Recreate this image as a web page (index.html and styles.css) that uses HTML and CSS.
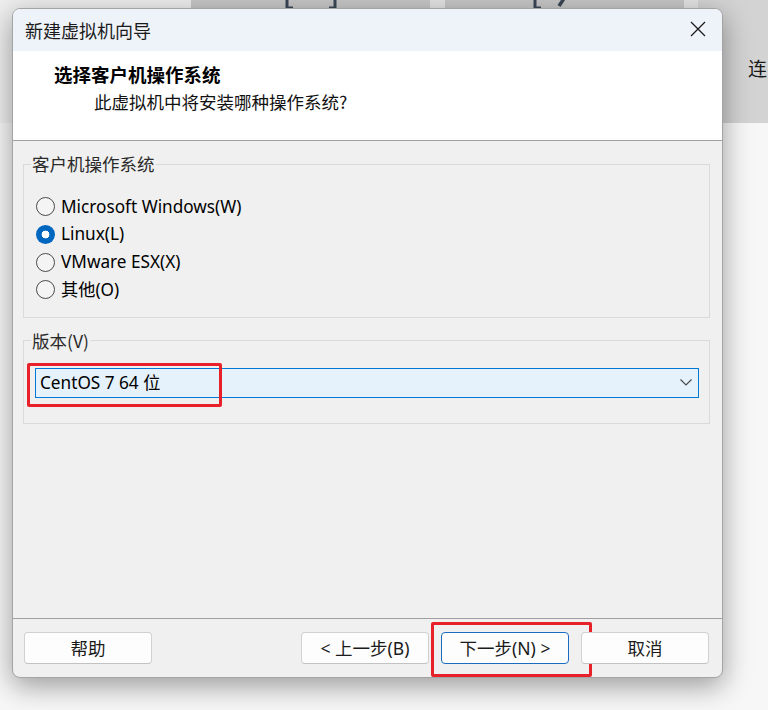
FILE: index.html
```html
<!DOCTYPE html>
<html lang="zh-CN">
<head>
<meta charset="utf-8">
<title>新建虚拟机向导</title>
<link rel="stylesheet" href="styles.css">
</head>
<body>
<div class="desktop">
  <div class="toolbar">
    <div class="strip strip-left"></div>
    <div class="tile">
      <svg class="tile-icon" width="64" height="30" viewBox="0 0 64 30">
        <path d="M8 0 V26 H14 M56 0 V26 H50" fill="none" stroke="#3b4756" stroke-width="3"/>
        <path d="M20 8 H44 M32 0 V16" fill="none" stroke="#3b4756" stroke-width="3.5"/>
      </svg>
    </div>
    <div class="strip"></div>
    <div class="tile">
      <svg class="tile-icon" width="72" height="30" viewBox="0 0 72 30">
        <path d="M6 0 V26 H12" fill="none" stroke="#3b4756" stroke-width="3"/>
        <path d="M30 24 L46 0" fill="none" stroke="#3b4756" stroke-width="3.5"/>
        <path d="M66 0 V18" fill="none" stroke="#3b4756" stroke-width="3"/>
      </svg>
    </div>
    <div class="strip strip-narrow"></div>
    <div class="tile tile-right"><span class="bg-text">连</span></div>
  </div>
  <div class="desk-lower"></div>
</div>

<div class="dialog">
  <div class="titlebar">
    <span class="title">新建虚拟机向导</span>
    <svg class="close" width="16" height="16" viewBox="0 0 16 16">
      <path d="M1 1 L15 15 M15 1 L1 15" stroke="#1b1b1b" stroke-width="1.3" fill="none"/>
    </svg>
  </div>
  <div class="header">
    <div class="header-title">选择客户机操作系统</div>
    <div class="header-sub">此虚拟机中将安装哪种操作系统?</div>
  </div>
  <div class="body">
    <fieldset class="group group-os">
      <legend>客户机操作系统</legend>
      <div class="radios">
        <div class="radio-row"><span class="radio"></span><span class="radio-label">Microsoft Windows(W)</span></div>
        <div class="radio-row"><span class="radio checked"></span><span class="radio-label">Linux(L)</span></div>
        <div class="radio-row"><span class="radio"></span><span class="radio-label">VMware ESX(X)</span></div>
        <div class="radio-row"><span class="radio"></span><span class="radio-label">其他(O)</span></div>
      </div>
    </fieldset>
    <fieldset class="group group-ver">
      <legend>版本(V)</legend>
      <div class="combo">
        <span class="combo-text">CentOS 7 64 位</span>
        <svg class="chevron" width="12" height="7" viewBox="0 0 12 7">
          <path d="M0.5 0.5 L6 6 L11.5 0.5" stroke="#4a4a4a" stroke-width="1.2" fill="none"/>
        </svg>
        <span class="highlight highlight-combo"></span>
      </div>
    </fieldset>
  </div>
  <div class="footer">
    <button class="btn">帮助</button>
    <div class="btn-group">
      <button class="btn">&lt; 上一步(B)</button>
      <button class="btn btn-primary">下一步(N) &gt;<span class="highlight highlight-next"></span></button>
      <button class="btn">取消</button>
    </div>
  </div>
</div>
</body>
</html>
```

FILE: styles.css
```css
* { box-sizing: border-box; }

html, body {
  margin: 0;
  padding: 0;
}

body {
  width: 768px;
  height: 710px;
  overflow: hidden;
  position: relative;
  background: #f6f6f6;
  font-family: "Noto Sans", "Noto Sans CJK SC", sans-serif;
  color: #111;
}

.desktop {
  position: absolute;
  inset: 0;
  display: flex;
  flex-direction: column;
}

.toolbar {
  display: flex;
  height: 123px;
}

.strip {
  width: 15px;
  background: #e3e3e3;
}

.strip-left {
  width: 191px;
  background: #eeeeee;
}

.strip-narrow { width: 14px; }

.tile {
  width: 239px;
  background: #c6c6c6;
  display: flex;
  justify-content: center;
  align-items: flex-start;
  overflow: hidden;
}

.tile-icon {
  margin-top: -18px;
}

.tile-right {
  flex: 1;
  width: auto;
  background: #d3d3d3;
  justify-content: flex-start;
  padding: 56px 0 0 50px;
}

.bg-text {
  font-family: "Noto Sans CJK SC", sans-serif;
  font-size: 19px;
  line-height: 24px;
  color: #1a1a1a;
  white-space: nowrap;
}

.desk-lower {
  flex: 1;
  background: #f7f7f7;
}

/* dialog window */
.dialog {
  position: absolute;
  left: 12px;
  top: 8px;
  width: 711px;
  height: 670px;
  border: 1px solid #a4a4a4;
  border-radius: 8px;
  overflow: hidden;
  display: flex;
  flex-direction: column;
  background: #f0f0f0;
  box-shadow: 0 8px 28px rgba(0, 0, 0, 0.38);
}

.titlebar {
  height: 42px;
  flex: none;
  background: #eef2f9;
  display: flex;
  align-items: center;
  justify-content: space-between;
  padding: 0 16px 0 12px;
}

.title {
  font-family: "Noto Sans CJK SC", sans-serif;
  font-size: 18px;
  line-height: 22px;
  color: #1a1a1a;
  margin-top: -1px;
}

.close { margin-top: -2px; }

.header {
  height: 90px;
  flex: none;
  background: #ffffff;
  border-bottom: 1px solid #a0a0a0;
  padding: 12px 0 0 41px;
  font-family: "Noto Sans CJK SC", sans-serif;
}

.header-title {
  font-size: 18.5px;
  line-height: 22px;
  font-weight: 700;
  color: #000;
}

.header-sub {
  margin-top: 6px;
  padding-left: 40px;
  font-size: 17.5px;
  line-height: 22px;
  color: #111;
}

.body {
  flex: 1;
  padding: 12px 12px 0 10px;
  display: flex;
  flex-direction: column;
}

.group {
  margin: 0;
  border: 1px solid #dadada;
  min-width: 0;
}

.group legend {
  padding: 0 1px;
  font-family: "Noto Sans CJK SC", sans-serif;
  font-size: 17.5px;
  line-height: 22px;
  color: #2a2a2a;
}

.group-os {
  padding: 18px 12px 13px 12px;
}

.group-os legend { margin-left: -5px; }

.radios {
  display: flex;
  flex-direction: column;
}

.radio-row {
  height: 27.67px;
  display: flex;
  align-items: center;
  gap: 6px;
}

.radio {
  width: 19px;
  height: 19px;
  border-radius: 50%;
  border: 1px solid #4a4a4a;
  background: #f4f4f4;
  flex: none;
}

.radio.checked {
  border: none;
  background: radial-gradient(circle, #ffffff 0 3.6px, #0067c0 4.2px);
}

.radio-label {
  font-size: 17.2px;
  line-height: 22px;
  color: #000;
}

.group-ver {
  margin-top: 12px;
  padding: 16px 10px 25px 11px;
}

.group-ver legend { margin-left: -4px; }

.combo {
  position: relative;
  height: 30px;
  background: #e5f1fb;
  border: 1px solid #0078d4;
  display: flex;
  align-items: center;
  justify-content: space-between;
  padding: 0 6px 0 4px;
}

.combo-text {
  font-size: 17.2px;
  line-height: 22px;
  color: #000;
}

.highlight {
  position: absolute;
  border: 3px solid #e8202a;
  border-radius: 2px;
  pointer-events: none;
}

.highlight-combo {
  left: -9px;
  top: -6px;
  width: 195px;
  height: 44px;
}

.footer {
  flex: none;
  height: 59px;
  border-top: 1px solid #a0a0a0;
  padding: 13px 13px 0 11px;
  display: flex;
  justify-content: space-between;
  align-items: flex-start;
}

.btn-group {
  display: flex;
  gap: 12px;
}

.btn {
  position: relative;
  width: 128px;
  height: 32px;
  margin: 0;
  padding: 0;
  background: #fdfdfd;
  border: 1px solid #d1d1d1;
  border-bottom-color: #c2c2c2;
  border-radius: 4px;
  font-family: "Noto Sans", "Noto Sans CJK SC", sans-serif;
  font-size: 17.5px;
  line-height: 22px;
  color: #1a1a1a;
}

.btn-primary {
  border: 1px solid #1a6cc0;
}

.highlight-next {
  left: -11px;
  top: -11px;
  width: 161px;
  height: 55px;
}
```
